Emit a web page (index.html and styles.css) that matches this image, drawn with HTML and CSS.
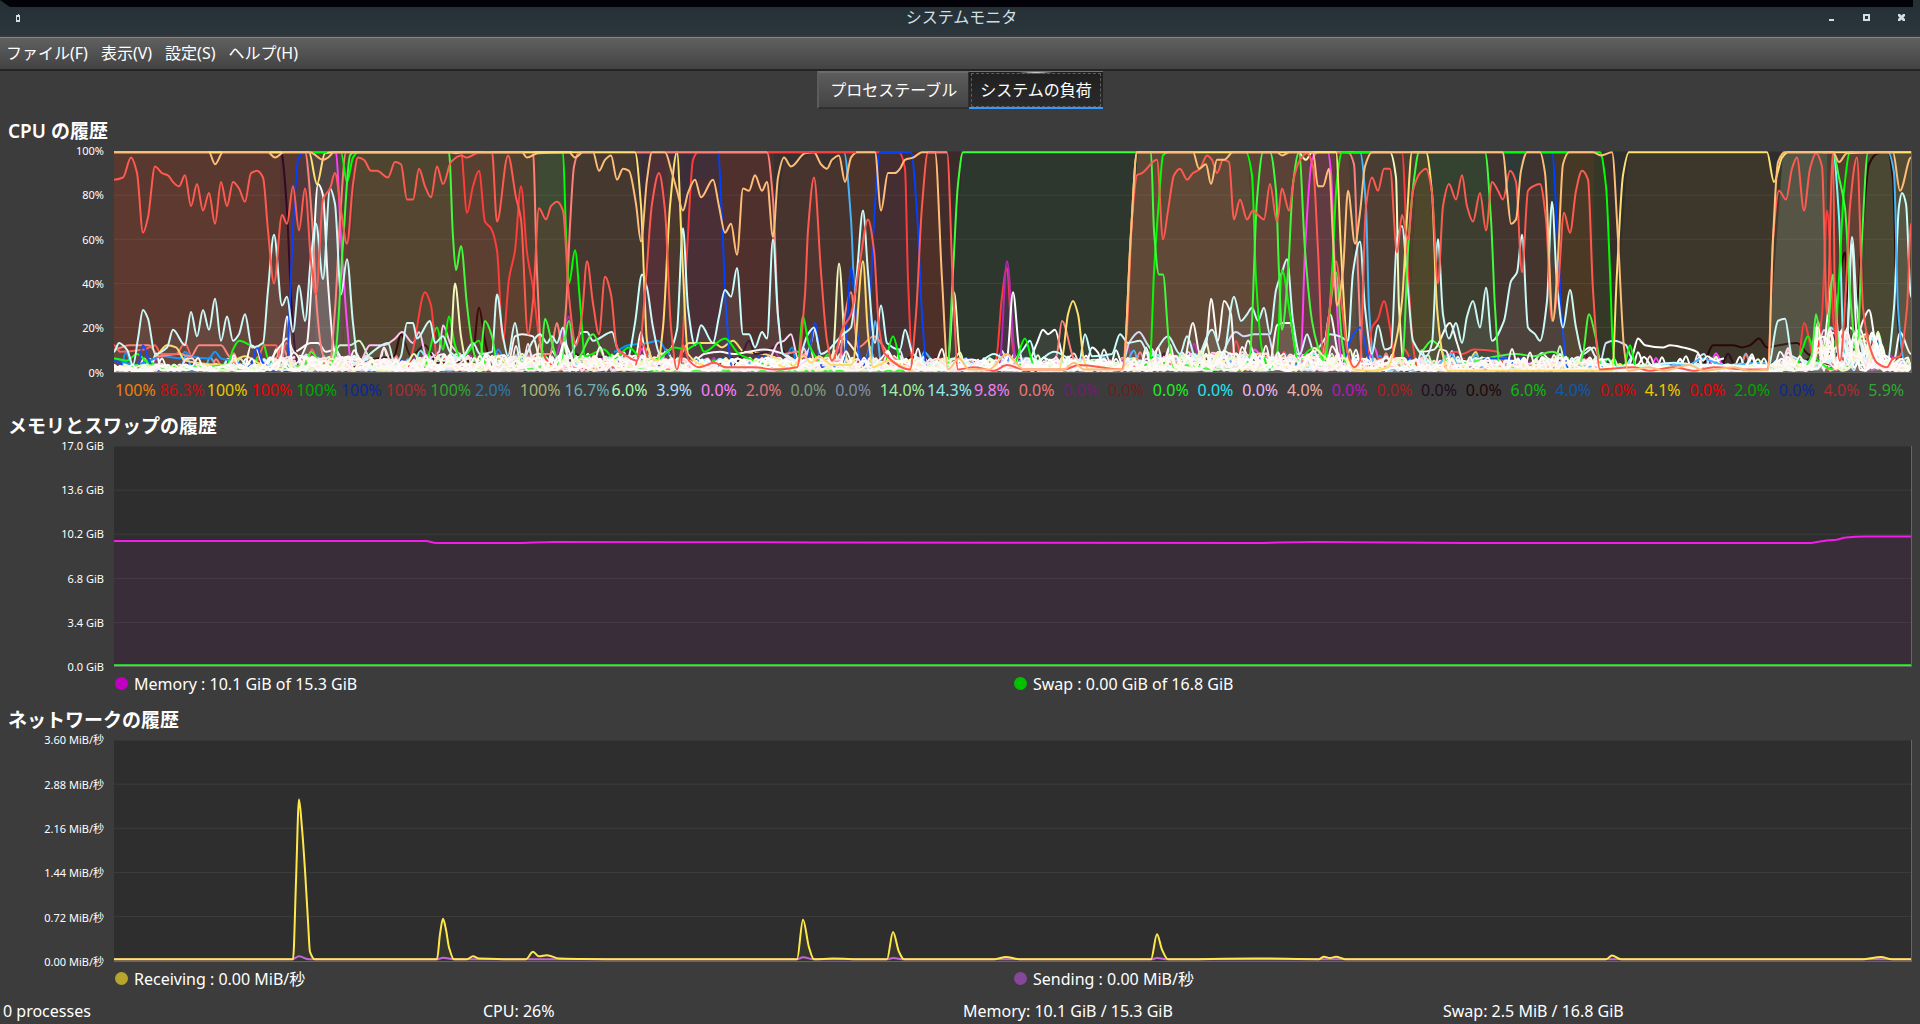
FILE: index.html
```html
<!DOCTYPE html>
<html lang="ja">
<head>
<meta charset="utf-8">
<title>システムモニタ</title>
<link rel="stylesheet" href="styles.css">
</head>
<body>
<header class="titlebar">
  <svg class="title-strip" viewBox="0 0 10 7" preserveAspectRatio="xMinYMin meet" aria-hidden="true"><path d="M0 0 10 7H0z"/></svg>
  <div class="title-row">
    <button class="win-btn win-menu" aria-label="ウィンドウメニュー"><svg viewBox="0 0 7 8"><path d="M1 1h2v-1h1v1h1v7h-4z M2 3v3h2v-3z" fill-rule="evenodd"/></svg></button>
    <h1 class="title-text">システムモニタ</h1>
    <div class="win-controls">
      <button class="win-btn" aria-label="最小化"><svg viewBox="0 0 7 7"><path d="M1 5h5v2H1z"/></svg></button>
      <button class="win-btn" aria-label="最大化"><svg viewBox="0 0 7 7"><path d="M0 0h7v7H0z M2 2v3h3V2z" fill-rule="evenodd"/></svg></button>
      <button class="win-btn" aria-label="閉じる"><svg viewBox="0 0 7 7"><path d="M0 0h2l1.500 1.500L5 0h2v2L5.500 3.500 7 5v2H5L3.500 5.500 2 7H0V5l1.500-1.500L0 2z"/></svg></button>
    </div>
  </div>
</header>
<nav class="menubar">
  <button>ファイル(F)</button><button>表示(V)</button><button>設定(S)</button><button>ヘルプ(H)</button>
</nav>
<div class="tabs" role="tablist">
  <button class="tab" role="tab" aria-selected="false">プロセステーブル</button>
  <button class="tab tab-active" role="tab" aria-selected="true">システムの負荷</button>
</div>
<main class="sheets">
  <section class="panel">
    <h2>CPU の履歴</h2>
    <div class="plot">
      <div class="axis"><span>100%</span><span>80%</span><span>60%</span><span>40%</span><span>20%</span><span>0%</span></div>
      <svg class="chart" id="cpu" viewBox="0 0 1797 100" preserveAspectRatio="none" role="img" aria-label="CPU の履歴"></svg>
    </div>
    <div class="cpu-values" id="cpu-values"></div>
  </section>
  <section class="panel">
    <h2>メモリとスワップの履歴</h2>
    <div class="plot">
      <div class="axis"><span>17.0 GiB</span><span>13.6 GiB</span><span>10.2 GiB</span><span>6.8 GiB</span><span>3.4 GiB</span><span>0.0 GiB</span></div>
      <svg class="chart" id="mem" viewBox="0 0 1797 100" preserveAspectRatio="none" role="img" aria-label="メモリとスワップの履歴"></svg>
    </div>
    <div class="legend"><span class="key memory">Memory : 10.1 GiB of 15.3 GiB</span><span class="key swap">Swap : 0.00 GiB of 16.8 GiB</span></div>
  </section>
  <section class="panel">
    <h2>ネットワークの履歴</h2>
    <div class="plot">
      <div class="axis"><span>3.60 MiB/秒</span><span>2.88 MiB/秒</span><span>2.16 MiB/秒</span><span>1.44 MiB/秒</span><span>0.72 MiB/秒</span><span>0.00 MiB/秒</span></div>
      <svg class="chart" id="net" viewBox="0 0 1797 100" preserveAspectRatio="none" role="img" aria-label="ネットワークの履歴"></svg>
    </div>
    <div class="legend"><span class="key receiving">Receiving : 0.00 MiB/秒</span><span class="key sending">Sending : 0.00 MiB/秒</span></div>
  </section>
</main>
<footer class="status"><span>0 processes</span><span>CPU: 26%</span><span>Memory: 10.1 GiB / 15.3 GiB</span><span>Swap: 2.5 MiB / 16.8 GiB</span></footer>
<script src="charts.js"></script>
</body>
</html>
```
FILE: styles.css
```css
* { box-sizing: border-box; }

body {
  margin: 0;
  min-height: 100vh;
  display: flex;
  flex-direction: column;
  background: #3c3c3c;
  color: #fff;
  font: 16px/20px "Noto Sans", "Noto Sans CJK JP", sans-serif;
}

button {
  font: inherit;
  color: inherit;
  border: 0;
  background: none;
}

.titlebar {
  background: linear-gradient(#253036, #2a363c);
  border-bottom: 2px solid #3a3a3b;
}

.title-strip {
  display: block;
  width: calc(100% - 7px);
  height: 7px;
  background: #020208;
  fill: #253036;
}

.title-row {
  display: grid;
  grid-template-columns: 1fr auto 1fr;
  align-items: center;
  height: 28px;
  padding: 0 1px 0 4px;
  color: #cfdfe3;
}

.title-text {
  margin: 0;
  font-size: 16px;
  font-weight: 400;
  line-height: 20px;
  padding-bottom: 8px;
}

.win-controls {
  display: flex;
  justify-content: flex-end;
}

.win-btn {
  width: 35px;
  height: 28px;
  padding: 0 0 7px;
  display: flex;
  align-items: center;
  justify-content: center;
}

.win-btn svg {
  width: 7px;
  height: 7px;
  fill: #cfdfe3;
}

.win-menu { width: 29px; }

.win-menu svg { height: 8px; }

.menubar {
  display: flex;
  height: 34px;
  border-top: 1px solid #868686;
  border-bottom: 2px solid #252525;
  background: linear-gradient(#606060, #434343);
}

.menubar button { padding: 0 7px 2px 6px; }

.tabs {
  display: flex;
  justify-content: center;
  height: 38px;
}

.tab {
  padding: 0 11px;
  border: solid;
  border-width: 2px 1px 2px 2px;
  border-color: #6c6c6c #303030 #303030 #5c5c5c;
  background: linear-gradient(#5c5c5c, #444);
}

.tab-active {
  border-width: 1px 0 2px;
  border-color: #777 transparent #3498ff;
  background:
    radial-gradient(ellipse 18px 2px at 50% 0, #fff, transparent),
    linear-gradient(#1f1f1f, #2b2b2b);
  outline: 1px dashed #606060;
  outline-offset: -3px;
}

.sheets {
  flex: 1;
  display: flex;
  flex-direction: column;
}

.panel {
  flex: 1;
  display: flex;
  flex-direction: column;
  padding-right: 8px;
}

h2 {
  margin: 0;
  padding: 8px 8px 6px;
  font-size: 19px;
  line-height: 28px;
  font-weight: 600;
}

.plot {
  flex: 1;
  display: flex;
  min-height: 120px;
}

.axis {
  width: 114px;
  padding-right: 10px;
  margin: -8px 0;
  display: flex;
  flex-direction: column;
  justify-content: space-between;
  text-align: right;
  font-size: 11px;
  line-height: 16px;
}

.chart {
  flex: 1;
  min-width: 0;
  height: auto;
  background: #2e2e2e;
  border: solid #666;
  border-width: 0 1px 1px 0;
}

.chart path {
  vector-effect: non-scaling-stroke;
  stroke-width: 2;
  stroke-linejoin: round;
}

.chart .grid {
  stroke: #fff;
  stroke-opacity: .07;
  stroke-width: 1;
}

.cpu-values,
.legend {
  height: 31px;
  margin-left: 114px;
  display: grid;
}

.cpu-values {
  padding-top: 7px;
  grid-template-columns: repeat(40, minmax(max-content, 1fr));
}

.cpu-values span { padding: 0 1px; }

.legend {
  padding-top: 2px;
  grid-template-columns: 1fr 1fr;
}

.key {
  display: flex;
  align-items: center;
  gap: 6px;
  padding: 0 1px;
}

.key::before {
  content: "";
  width: 13px;
  height: 13px;
  border-radius: 50%;
  background: currentColor;
}

.memory::before { background: #c000c0; }
.swap::before { background: #00c000; }
.receiving::before { background: #b7a62e; }
.sending::before { background: #86469a; }

.status {
  display: grid;
  grid-template-columns: repeat(4, 1fr);
  padding: 8px 0 3px;
}

.status span { padding-left: 3px; }
```
FILE: charts.js
```js
const NS = 'http://www.w3.org/2000/svg';

// Monotone cubic through "x,percent" samples; y grows downwards in the view box.
function curve(points) {
  const p = points.map(([x, v]) => [x, 100 - Math.max(0.4, Math.min(99.4, v))]);
  const s = [];
  for (let i = 0; i < p.length - 1; i++) s.push((p[i + 1][1] - p[i][1]) / (p[i + 1][0] - p[i][0]));
  const m = p.map((_, i) => {
    if (i === 0 || i === p.length - 1) return 0;
    return s[i - 1] * s[i] <= 0 ? 0 : 2 * s[i - 1] * s[i] / (s[i - 1] + s[i]);
  });
  let d = `M${p[0][0]} ${p[0][1]}`;
  for (let i = 0; i < s.length; i++) {
    const h = (p[i + 1][0] - p[i][0]) / 3;
    d += `C${(p[i][0] + h).toFixed(1)} ${(p[i][1] + m[i] * h).toFixed(1)} ${(p[i + 1][0] - h).toFixed(1)} ${(p[i + 1][1] - m[i + 1] * h).toFixed(1)} ${p[i + 1][0]} ${p[i + 1][1].toFixed(1)}`;
  }
  return d;
}

function path(svg, d, attrs) {
  const e = document.createElementNS(NS, 'path');
  e.setAttribute('d', d);
  for (const k in attrs) e.setAttribute(k, attrs[k]);
  svg.appendChild(e);
}

const parse = text => text.trim().split(/\s+/).map(t => t.split(',').map(Number));

function series(svg, color, data, fill = 0) {
  const pts = typeof data === 'string' ? parse(data) : data;
  const d = curve(pts);
  if (fill) path(svg, `${d}L${pts[pts.length - 1][0]} 100L${pts[0][0]} 100Z`, { fill: color, 'fill-opacity': fill });
  path(svg, d, { fill: 'none', stroke: color });
}

function grid(svg) {
  path(svg, 'M0 0H1797M0 20H1797M0 40H1797M0 60H1797M0 80H1797', { class: 'grid', fill: 'none' });
}

const cpu = document.getElementById('cpu');

// Stacked translucent load of the busy cores: left edge, blended colour, slant of that edge.
const bands = [
  [0, '#58382f'], [177, '#52383a', -8], [197, '#504442', 6], [227, '#5a3b33'], [235, '#4e4530', -8], [337, '#503f2f'],
  [380, '#50402f'], [421, '#444430'], [452, '#44382f', 5], [528, '#43302f'], [534, '#4e2f36'], [553, '#4a382f'],
  [569, '#432f38'], [610, '#48302d', 6], [662, '#40352f', 5], [738, '#45352a', 6], [759, '#3d2e32', -5], [804, '#472e28', 6],
  [828, '#3a2a2a', 6], [841, '#2e372e', -8], [1016, '#5b4837', -8], [1140, '#5a4336', 6], [1191, '#603b42', -5], [1224, '#554033', 3],
  [1240, '#453f3a', 5], [1253, '#493d31', 6], [1298, '#47462a', -5], [1322, '#373d2f', 6], [1378, '#3e332e', 6], [1446, '#453824', 6],
  [1480, '#353827'], [1495, '#382e29', 6], [1506, '#3c372a', -8], [1661, '#505545', -8], [1713, '#523b2f'], [1733, '#5c4034'],
  [1750, '#4a4832', -4], [1783, '#504a35', 5], [1797, '#504a35']
];
for (let i = 0; i < bands.length - 1; i++) {
  const [a, color, sa = 0] = bands[i], [b, , sb = 0] = bands[i + 1];
  path(cpu, `M${a - sa} 0H${b - sb}L${b + sb} 100H${a + sa}Z`, { fill: color });
}
path(cpu, 'M425 0H450C452 70 451 50 455 70L449 28 437 25 425 28Z', { fill: '#3f4a35' });
path(cpu, 'M520 0H604L611 37 599 13 581 13 569 27 551 0 538 0 527 40Z', { fill: '#352e3c', 'fill-opacity': .7 });
path(cpu, 'M1312 0H1371L1377 30 1372 36 1348 11 1335 15 1324 60Z', { fill: '#33432f' });
path(cpu, 'M1389 0H1438L1443 33 1426 0 1413 0 1402 31 1396 33Z', { fill: '#2d3a38' });
path(cpu, 'M660 0H730L725 3 713 8 700 0 677 7 670 4 659 40Z', { fill: '#302f2f' });
path(cpu, 'M1498 0H1515L1503 55Z', { fill: '#2f2e2e' });
path(cpu, 'M1653 0H1668L1660 14Z', { fill: '#2f2e2e' });
grid(cpu);

// Idle cores hovering close to zero.
let seed = 20117;
const rnd = () => (seed = (seed * 16807) % 2147483647) / 2147483647;
const peak = x => {
  if (x < 150) return 4;
  if (x < 255) return 8;
  if (x > 1700 && x < 1765) return 22;
  if (x >= 1490 && x < 1660) return 4;
  if (x > 300 && x < 540) return 9;
  if (x > 1040 && x < 1235) return 10;
  return 7;
};
function idleCores(colors) {
  colors.forEach((color, k) => {
    const pts = [];
    for (let x = 0; x < 1797; x += 6) {
      const r = rnd(), lift = rnd();
      pts.push([x, (r * r * .8 + lift * .15) * peak(x) + (lift > .97 ? 5 : 0)]);
    }
    pts.push([1797, 2]);
    series(cpu, color, pts, k % 6 === 0 ? .04 : 0);
  });
}
idleCores(['#ff40ff', '#300c20', '#0090ff', '#ff3c3c', '#2a0808', '#b428b4', '#00ff00', '#0040ff', '#ffe070', '#40b8ff',
  '#c8ffc8', '#ffc8ff', '#ff8078', '#70ffff', '#ffe8f0', '#f0ffc0', '#fff', '#fff', '#d0e0ff', '#fff', '#fff', '#ffe0e0',
  '#fff', '#e0ffff', '#fff']);

series(cpu, '#0090ff', '0,6 20,3 35,5 48,7 66,6 71,9 77,7 95,6 101,9 107,6 119,5 140,1');
series(cpu, '#ff8078', '0,10 15,12 35,12 45,7 65,8 77,7 85,12 107,12 115,7 125,3');
series(cpu, '#ff5a50', '0,12 6,9 30,10 41,12 47,8 62,8 71,13 77,8');
series(cpu, '#ffe070', '41,7 53,12 62,11 71,5 110,3 131,7 150,3');
series(cpu, '#00ff00', '0,6 13,5 23,8 35,4 77,2 113,3 119,10 125,14 143,11 149,13 154,6 165,3');
series(cpu, '#ff5a50', '143,5 150,12 162,12 167,4 172,13 180,9 190,5');
series(cpu, '#fff', '130,1 137,12 143,10 149,3 167,12 173,15 180,9 197,13 204,13 212,9 221,10 233,2');
series(cpu, '#c8ffc8', '215,3 226,12 236,12 245,14 256,6 270,2');
series(cpu, '#2a0808', '238,2 262,6 280,7 287,17 297,7 311,12 323,4 358,5 365,29 371,14 378,3');
series(cpu, '#ffc8ff', '245,4 256,12 270,12 281,15 288,18 299,13 305,18 313,6 325,9 329,21 337,12 347,8');
series(cpu, '#00ff00', '310,2 323,20 329,10 335,25 341,12 347,6 365,14 372,3');
series(cpu, '#0090ff', '500,9 514,12 533,13 544,14 556,8');
series(cpu, '#ffe070', '560,3 575,13 600,13 608,11 619,14 630,9 650,8 683,3');
series(cpu, '#30082a', '620,3 629,9 635,14 641,8 653,9 664,12 680,3');
series(cpu, '#ffd8ff', '655,6 664,13 670,14 677,17 684,6 695,10 701,19 708,3');
series(cpu, '#fff', '583,6 590,8 606,9 620,8 635,9 650,10 670,8 690,3 718,6 729,15 740,10 750,3');
series(cpu, '#d0e0ff', '1009,4 1015,13 1025,18 1034,12 1050,3');
series(cpu, '#d0e0ff', '1100,3 1122,18 1130,16 1140,17 1154,17 1162,3');
series(cpu, '#ff3c3c', '1329,7 1342,9 1348,8 1360,10 1384,9 1390,3');
series(cpu, '#3cff3c', '1306,9 1318,14 1326,11 1335,3 1402,8 1420,7 1438,9 1455,6');
series(cpu, '#d0e0ff', '1486,4 1492,13 1500,14 1512,12 1518,6');

// Peaks of the single cores.
series(cpu, '#30082a', '166,100 168,98 173,73 177,34 181,10 186,1', .06);
series(cpu, '#2a0808', '1588,2 1593,7 1599,12 1619,12 1628,11 1636,12 1645,15 1653,11 1665,12 1683,13 1694,8 1719,3 1725,40 1731,54 1736,14 1743,29 1749,67 1755,94 1764,99 1774,100 1779,87 1783,29 1788,5 1797,3');
series(cpu, '#b428b4', '439,4 449,18 455,25 460,6');
series(cpu, '#ff3c3c', '294,2 299,10 311,36 317,30 323,7');
series(cpu, '#ff3c3c', '880,1 883,8 888,34 893,47 898,14 903,3');
series(cpu, '#b428b4', '882,1 886,5 893,50 901,7 905,2', .15);
series(cpu, '#40b8ff', '730,100 737,69 741,29 748,1 756,2 761,23 768,2');
series(cpu, '#40b8ff', '1232,100 1246,100 1252,75 1255,29 1261,1 1320,1 1330,6 1337,8 1345,2 1574,3 1588,6 1610,3 1651,4 1660,1');
series(cpu, '#70ffff', '1709,100 1719,100 1725,70 1730,8 1735,3');
series(cpu, '#ff40ff', '220,100 222,99 227,61 233,22 238,1');
series(cpu, '#ff40ff', '1183,3 1187,8 1191,55 1198,96 1204,100 1214,100 1217,90 1221,45 1228,5');
series(cpu, '#fff', '160,3 167,7 173,25 179,3 193,13 198,43 204,85 209,80 214,40 220,10 226,2', .12);
series(cpu, '#fff', '394,3 401,16 408,17 419,16 426,6');
series(cpu, '#fff', '521,5 527,18 533,3');
series(cpu, '#fff', '884,3 893,6 899,36 905,11 911,2 923,13 929,19 934,17 941,19 948,8 952,3', .06);
series(cpu, '#fff', '1069,3 1079,22 1086,8 1092,12 1097,33 1104,14 1110,32 1117,26 1121,5', .06);
series(cpu, '#fff', '1156,5 1163,21 1169,22 1176,22 1184,6 1208,6 1216,26 1224,8 1228,3', .06);
series(cpu, '#fff', '1306,9 1320,10 1336,22 1343,13 1352,2');
series(cpu, '#fff', '1515,3 1519,8 1524,15 1531,12 1549,11 1556,12 1569,11 1583,9 1589,5 1593,7 1602,5 1610,6');
series(cpu, '#fff', '1462,3 1469,9 1476,11 1481,7 1490,3');
series(cpu, '#fff', '1660,2 1666,9 1674,4 1696,3 1702,20 1708,8 1719,43 1726,8 1732,6 1738,58 1743,16 1749,23 1755,28 1763,11 1768,12 1773,4 1780,5 1786,18 1797,8', .06);
series(cpu, '#f0ffc0', '330,3 336,7 341,40 347,16 353,4', .06);
series(cpu, '#f0ffc0', '714,3 719,8 725,49 732,7 737,2', .06);
series(cpu, '#f0ffc0', '834,5 840,36 846,7 852,2', .06);
series(cpu, '#f0ffc0', '1184,100 1192,96 1198,100 1276,100 1282,88 1285,29 1291,1');
series(cpu, '#ff3c3c', '1254,8 1258,20 1264,24 1270,32 1276,20 1282,4');
series(cpu, '#ff3c3c', '1276,100 1288,100 1294,45 1299,12 1304,1');
series(cpu, '#ff3c3c', '1680,1 1684,3 1690,22 1701,5 1708,26 1713,73 1720,20 1726,10 1732,4');
series(cpu, '#ff3c3c', '347,100 353,72 359,84 365,91 371,68 377,65 383,55 389,14 395,42 401,55 407,84 413,54 419,38 426,13 433,5 445,1 459,2 470,1 500,2 520,1 528,13 536,4 545,1 566,1 573,54 579,96 584,100 785,100 791,92 794,42 799,1', .04);
series(cpu, '#ff8078', '191,100 198,69 203,28 208,9 215,2 221,28 226,69 232,100 419,100 423,45 428,8 436,8 443,22 448,12 452,29 456,66 460,93 465,100 653,100 659,78 664,26 669,8 683,9 700,5 725,5 731,26 737,36 744,11 760,16 775,8 800,2');
series(cpu, '#ff8078', '938,2 943,8 948,23 958,8 964,1');
series(cpu, '#ff8078', '1222,100 1234,100 1240,94 1244,45 1249,1 1262,2 1290,3 1310,1 1340,3 1370,1 1400,3 1450,2');
series(cpu, '#0040ff', '0,5 16,1 23,1 29,12 36,4 41,0 119,0 131,2 137,3 143,11 149,4 161,1 173,2 176,34 180,73 184,96 190,100 604,100 608,69 612,29 618,2');
series(cpu, '#0040ff', '690,2 695,8 701,22 708,2 726,2 731,8 737,47 743,19 748,2 754,8 759,60 766,100 797,100 803,72 808,26 813,2');
series(cpu, '#0040ff', '1228,3 1236,14 1246,20 1254,7 1258,1');
series(cpu, '#0040ff', '1360,3 1372,6 1396,6 1400,2');
series(cpu, '#0040ff', '1432,100 1438,100 1443,67 1448,23 1454,2');
series(cpu, '#c8ffff', '0,9 5,13 13,10 19,3 24,15 29,28 34,24 41,8 53,11 59,19 71,12 77,27 83,16 89,28 95,19 101,33 107,14 113,25 119,14 125,17 131,26 138,11 149,13 154,37 160,62 168,30 173,34 179,18 185,39 191,23 197,52 202,67 209,42 216,83 221,76 227,35 233,51 239,22 245,3 256,8 274,13 281,3 287,7 293,22 299,22 303,15 316,23 321,13 329,16 336,9 347,6 359,13 366,8 378,9 383,35 389,16 394,7 401,22 408,5 419,14 426,17 433,13 438,16 443,13 449,20 455,7 468,18 473,18 479,14 498,18 504,10 514,7 521,22 528,44 533,38 539,20 546,8 556,10 563,19 569,65 574,29 581,12 587,21 599,13 605,25 611,37 617,34 623,47 629,17 635,17 641,11 648,18 653,15 659,60 664,25 669,8 683,5 694,17 700,20 707,8 729,17 737,20 743,45 749,73 754,45 761,13 767,30 773,13 786,10 791,19 799,8 820,3 840,6 860,3 880,8 896,4 909,10 916,14 923,5 940,9 965,4 971,17 978,7 998,8 1006,17 1014,13 1026,14 1036,7 1054,16 1066,8 1073,16 1082,6 1098,19 1109,7 1120,34 1127,23 1133,26 1138,29 1144,23 1150,29 1156,17 1162,37 1168,45 1173,51 1179,23 1186,8 1193,17 1200,9 1216,17 1226,16 1234,14 1239,45 1246,59 1251,29 1258,8 1264,21 1271,10 1277,11 1283,60 1288,66 1294,37 1299,14 1312,7 1318,13 1324,60 1329,26 1335,15 1342,22 1348,13 1353,25 1359,32 1366,20 1372,38 1378,14 1390,23 1397,41 1403,45 1408,62 1414,20 1421,17 1426,14 1433,32 1438,77 1443,40 1449,20 1456,37 1462,20 1469,8 1480,11 1488,4 1520,2 1560,4 1600,2 1654,2 1664,23 1671,24 1678,7 1700,4 1732,8 1738,61 1743,29 1750,6 1773,4 1780,29 1785,75 1788,81 1792,76 1797,34', .07);
series(cpu, '#00ff00', '196,100 227,100 233,86 239,97 244,100 449,100 452,63 455,40 461,55 466,32 471,7 490,10 500,6 515,11 530,5 545,6 560,11 572,10 585,13 590,9 611,15 625,8 640,5 660,2 683,1 689,25 695,12 707,5');
series(cpu, '#00ff00', '770,4 779,16 788,3');
series(cpu, '#00ff00', '900,4 911,15 920,3');
series(cpu, '#00ff00', '1030,3 1036,5 1040,45 1045,78 1049,98 1054,100 1132,100 1138,89 1142,42 1148,10 1156,1 1163,8 1168,46 1176,26 1184,5 1196,10 1204,11 1211,4 1218,45 1223,87 1228,100 1486,100 1492,84 1496,45 1499,11 1503,1 1510,2 1516,12 1522,2');
series(cpu, '#00ff00', '1680,1 1689,11 1694,16 1702,6 1719,1 1725,42 1730,82 1736,100 1740,100');
series(cpu, '#3cff3c', '0,2 13,1 23,3 30,1 36,3 50,1 90,2 140,1 190,3 197,9 206,4 213,2 221,7 229,58 236,98 240,100 335,100 339,61 342,46 347,57 353,30 358,13 365,1 371,23 378,16 383,4 390,1 400,2 412,1 426,2 431,24 438,13 446,3 455,23 462,5 479,17 491,6 510,2 550,0 833,0 839,45 844,85 849,100 1037,100 1040,64 1045,44 1049,44 1055,13 1061,1 1070,3 1100,1 1130,2 1136,8 1143,78 1149,100 1156,100 1162,82 1165,45 1168,19 1174,45 1179,85 1185,100 1191,55 1198,23 1204,11 1209,5 1216,29 1222,45 1228,14 1234,1');
series(cpu, '#3cff3c', '1284,2 1289,8 1294,55 1300,87 1305,100 1371,100 1377,69 1381,29 1386,2');
series(cpu, '#3cff3c', '1464,2 1469,8 1475,26 1481,17 1488,2');
series(cpu, '#3cff3c', '1690,2 1698,8 1702,26 1708,10 1713,14 1719,44 1725,12');
series(cpu, '#3cff3c', '1719,100 1725,88 1731,74 1737,30 1743,8 1748,60 1754,100 1797,100');
series(cpu, '#40b8ff', '1774,100 1780,90 1784,29 1790,5 1797,3');
idleCores(['#fff', '#ffe8f0', '#f0ffc0', '#fff', '#fff', '#fff']);
series(cpu, '#ffe070', '0,100 195,100 203,85 211,99 220,100 521,100 527,75 533,14 538,6 544,5 549,20 556,75 563,100 568,55 574,8 590,3');
series(cpu, '#ffe070', '664,3 675,1 690,7 697,4 705,7 718,3 735,3 739,4 749,50 754,17 759,2 775,5 800,0');
series(cpu, '#ffe070', '945,1 949,8 954,26 959,32 964,26 970,5 975,1');
series(cpu, '#ffe070', '1009,1 1017,63 1023,100 1222,100 1227,55 1234,8 1240,1 1258,0 1274,2 1282,14 1288,32 1293,70 1298,100 1312,100 1318,81 1323,29 1329,7 1334,0 1498,0 1503,45 1509,89 1515,100 1653,100 1660,86 1668,97 1674,100 1797,100');
series(cpu, '#ff5a50', '0,87 9,88 17,97 23,90 29,63 34,70 41,93 48,90 54,89 59,86 65,84 71,89 77,75 83,85 89,73 95,81 101,67 107,86 113,75 119,86 125,83 131,77 137,90 143,91 149,88 154,64 160,40 168,71 173,67 179,84 185,64 191,83 197,50 202,35 209,78 216,83 221,90 227,73 233,58 239,85 244,97 250,96 257,91 263,91 274,88 281,95 287,94 293,78 299,78 305,92 311,84 317,79 323,93 329,85 337,95 347,98 353,97 363,99 378,100 383,68 394,98 402,79 407,69 414,17 419,32 425,74 432,69 437,75 443,77 449,73 455,34 462,12 468,26 473,50 479,31 485,17 491,43 497,35 503,11 513,7 523,5 526,11 532,42 538,76 545,90 551,73 557,20 563,1 569,12 575,5 585,2 600,4 612,2 640,2 660,1 683,2 691,35 694,64 700,88 707,45 713,14 718,5 729,20 737,26 746,50 754,69 760,55 765,20 771,8 796,1 802,26 808,75 814,100 833,100 839,38 844,1 860,2 880,0 893,3 910,1 950,1 965,3 1008,1 1013,20 1018,69 1023,89 1028,90 1043,96 1049,60 1054,73 1060,89 1066,92 1073,87 1079,90 1086,92 1093,98 1098,96 1103,90 1109,96 1115,95 1120,69 1126,78 1133,69 1139,73 1144,71 1150,69 1156,85 1163,68 1168,83 1175,73 1180,88 1186,96 1193,99 1199,93 1204,55 1209,8 1215,26 1222,50 1228,29 1234,8 1240,2 1246,5 1252,75 1258,88 1264,82 1270,92 1276,92 1283,54 1288,71 1294,60 1299,82 1306,90 1312,92 1318,81 1324,40 1329,75 1335,85 1342,78 1348,89 1353,75 1359,68 1366,81 1372,64 1378,86 1384,82 1389,78 1396,91 1402,86 1408,45 1414,82 1419,84 1426,85 1432,69 1438,23 1444,38 1450,72 1456,63 1462,82 1468,91 1474,87 1479,37 1486,1 1520,2 1535,0 1560,2 1580,0 1600,2 1630,1 1654,1 1659,60 1665,82 1672,78 1678,92 1683,97 1690,73 1696,92 1702,99 1708,93 1713,26 1719,100 1721,30 1726,5 1732,38 1736,75 1743,97 1749,29 1756,11 1763,4 1773,2 1779,6 1786,7 1793,29 1797,67', .04);
series(cpu, '#ffbe78', '0,100 95,100 101,94 109,100 154,100 161,97 170,100 196,100 209,96 214,97 220,100 337,100 342,99 347,100 408,100 413,97 424,99 455,100 461,97 469,100 479,100 485,91 491,96 497,98 503,87 509,92 515,91 522,76 527,59 533,87 538,100 551,100 558,90 563,82 569,73 574,81 581,87 587,79 599,87 605,75 611,63 617,67 623,53 629,83 635,82 641,89 648,82 653,86 659,61 664,88 670,97 677,93 691,99 700,100 707,94 713,92 718,96 725,98 731,86 737,97 743,100 761,100 767,73 774,90 781,90 786,92 791,96 799,97 808,100 821,100 828,42 834,1 845,6 855,1 875,1 893,8 900,5 910,1 950,1 960,4 970,1 1009,1 1017,63 1023,100 1079,100 1085,92 1092,94 1097,85 1103,96 1110,96 1119,100 1163,100 1168,98 1176,100 1199,100 1204,84 1209,84 1215,92 1219,60 1223,30 1229,46 1234,82 1241,58 1246,72 1251,93 1258,100 1389,100 1393,82 1397,67 1402,69 1407,91 1413,100 1426,100 1431,90 1439,23 1444,52 1449,94 1455,100 1479,100 1487,98 1498,100 1504,60 1510,11 1514,0 1535,2 1550,0 1575,3 1590,0 1620,2 1635,0 1654,1 1659,60 1664,95 1671,100 1719,100 1725,95 1733,99 1779,100 1786,82 1797,97');

// Cores pinned at full load stay visible along the top edge.
[['#ffe070', 95, 108], ['#ffe070', 156, 168], ['#00ff00', 199, 213], ['#ffe070', 420, 458], ['#ff8078', 522, 537], ['#ff8078', 552, 653],
  ['#ff3c3c', 654, 742], ['#0040ff', 766, 797], ['#ff8078', 814, 833], ['#00ff00', 1240, 1256], ['#00ff00', 1390, 1412], ['#00ff00', 1427, 1453]]
  .forEach(([c, a, b]) => path(cpu, `M${a} .6H${b}`, { stroke: c, fill: 'none' }));

const mem = document.getElementById('mem');
grid(mem);
series(mem, '#f01ee8', '0,57 312,57 322,56 400,56 440,56.500 700,56.300 1130,56 1200,56.500 1350,56 1695,56 1710,57 1722,57.500 1732,58.500 1750,59 1797,59', .06);
path(mem, 'M0 99.300H1797', { stroke: '#1eff1e', fill: 'none' });

const net = document.getElementById('net');
grid(net);
series(net, '#c060e0', '0,.6 178,.6 185,2 195,.6 323,.6 329,1.300 340,.6 683,.6 689,1.500 700,.6 773,.6 779,1.200 790,.6 1037,.6 1043,1.200 1054,.6 1797,.6');
series(net, '#ffe94a', '0,.6 179,.6 182,36 185,73 188,60 191,41 194,18 196,4 201,.6 323,.6 326,12 329,19 332,14 335,6 340,.6 353,.6 359,2 365,1 400,.6 412,.7 419,4 425,2 433,2.500 445,1 468,.8 520,.6 683,.6 689,18.600 695,6 700,.6 719,1 750,.6 773,.6 779,13 785,4 790,.6 881,.7 892,1.700 905,.7 1037,.6 1043,12 1048,5 1054,.6 1140,1 1205,.7 1210,1.800 1216,1.200 1222,1.800 1231,.7 1492,.6 1498,2.300 1507,.6 1750,.7 1767,1.700 1778,.6 1797,.6', .05);

const values = [
  ['100%', '#f08010'], ['86.3%', '#c81010'], ['100%', '#e8c800'], ['100%', '#f00000'], ['100%', '#00a800'], ['100%', '#0a2898'],
  ['100%', '#a83030'], ['100%', '#30a830'], ['2.0%', '#3078a8'], ['100%', '#a8b878'], ['16.7%', '#70b0b0'], ['6.0%', '#b0ffb0'],
  ['3.9%', '#b8e0ff'], ['0.0%', '#ff80ff'], ['2.0%', '#e07878'], ['0.0%', '#80a080'], ['0.0%', '#8090a8'], ['14.0%', '#a0f0a0'],
  ['14.3%', '#90e8f0'], ['9.8%', '#f080f0'], ['0.0%', '#f07878'], ['0.0%', '#702070'], ['0.0%', '#701c1c'], ['0.0%', '#20f020'],
  ['0.0%', '#20e8f0'], ['0.0%', '#f0b8f0'], ['4.0%', '#f0b0a8'], ['0.0%', '#b818b8'], ['0.0%', '#b01c1c'], ['0.0%', '#200c20'],
  ['0.0%', '#200808'], ['6.0%', '#10b810'], ['4.0%', '#1058b0'], ['0.0%', '#e00000'], ['4.1%', '#f0c800'], ['0.0%', '#f00000'],
  ['2.0%', '#00a800'], ['0.0%', '#0a2898'], ['4.0%', '#a83030'], ['5.9%', '#30a830']
];
const row = document.getElementById('cpu-values');
values.forEach(([text, color]) => {
  const s = document.createElement('span');
  s.textContent = text;
  s.style.color = color;
  row.appendChild(s);
});
```
